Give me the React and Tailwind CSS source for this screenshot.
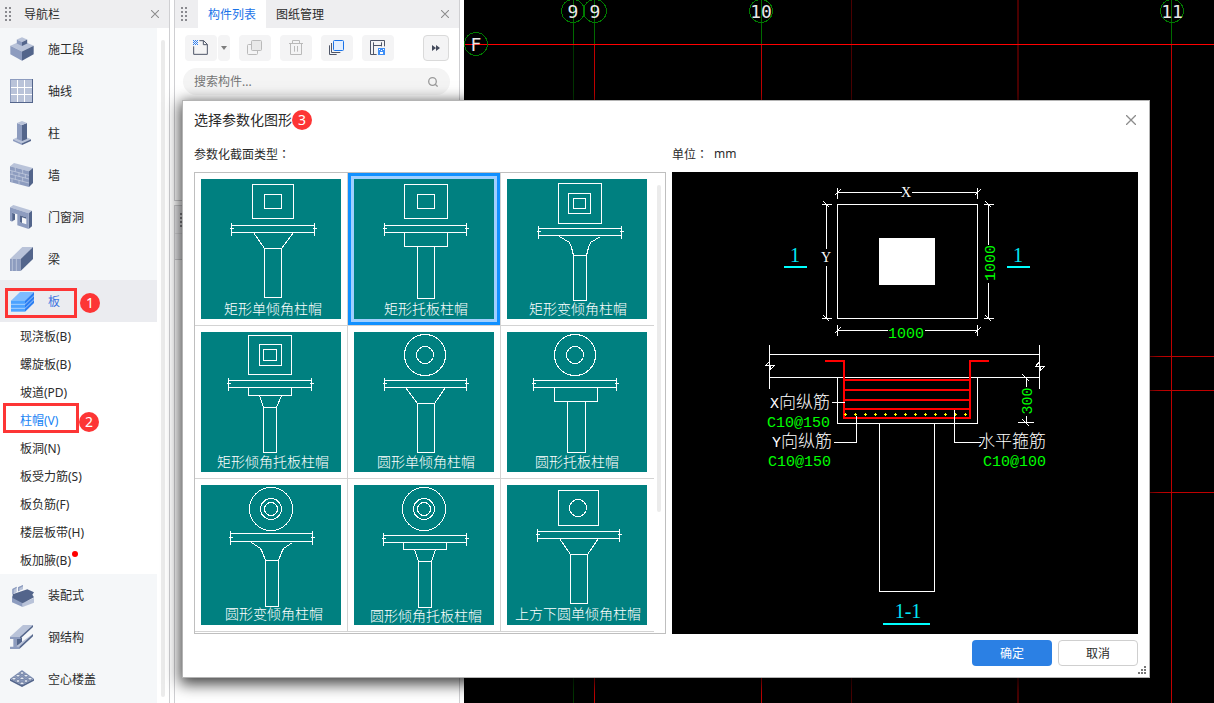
import { useState } from "react";
import clsx from "clsx";

const LIGHT = "#b9c3d9";
const MID = "#8d9cbf";
const DARK = "#53658b";

const NAV_ICONS = {
  stage: (
    <svg viewBox="30 110 72 74" className="h-6 w-6 shrink-0">
      <path fill={LIGHT} d="M66 121 102 137 66 155 30 137z" />
      <path fill={MID} d="M30 137 66 155V183L30 163z" />
      <path fill={DARK} d="M102 137 66 155V183L102 163z" />
      <path fill={LIGHT} d="M66 111 82 118 66 126 50 118z" />
      <path fill={MID} d="M50 118 66 126V138L50 130z" />
      <path fill={DARK} d="M82 118 66 126V138L82 130z" />
    </svg>
  ),
  axis: (
    <svg viewBox="30 237 72 72" className="h-6 w-6 shrink-0">
      <path fill={DARK} d="M30 237h69v72H30z" />
      <path fill={MID} d="M30 237h66v69H30z" />
      <path fill={LIGHT} d="M33 240h63v66H33z" />
      <path stroke="#fff" strokeWidth="3" d="M52.5 240v66M73.5 240v66M33 262.5h63M33 283.5h63" />
    </svg>
  ),
  column: (
    <svg viewBox="30 363 72 72" className="h-6 w-6 shrink-0">
      <path fill={LIGHT} d="M66 406 93 418 66 430 39 418z" />
      <path fill={MID} d="M39 418 66 430V435L39 423z" />
      <path fill={DARK} d="M93 418 66 430V435L93 423z" />
      <path fill={MID} d="M51 369 66 375V423L51 417z" />
      <path fill={DARK} d="M81 369 66 375V423L81 417z" />
      <path fill={LIGHT} d="M66 363 81 369 66 375 51 369z" />
    </svg>
  ),
  wall: (
    <svg viewBox="30 489 72 72" className="h-6 w-6 shrink-0">
      <path fill={LIGHT} d="M30 499 42 489 99 504 87 514z" />
      <path fill={MID} d="M30 499 87 514V561L30 546z" />
      <path fill={DARK} d="M87 514 99 504V549L87 561z" />
      <path
        fill="none"
        stroke="#cbd3e4"
        strokeWidth="2"
        d="M30 511 87 526M30 522 87 537M30 534 87 549M46 503v12M68 509v12M36 513v11M57 518v12M76 523v11M46 527v11M68 532v12M36 536v11M57 541v12"
      />
    </svg>
  ),
  opening: (
    <svg viewBox="30 615 72 72" className="h-6 w-6 shrink-0">
      <path fill={LIGHT} d="M30 622 40 615 96 632 86 640z" />
      <path fill={DARK} d="M86 640 96 632V679L86 687zM36 638 45 641V659L36 664z" />
      <path
        fill={MID}
        fillRule="evenodd"
        d="M30 622 86 640V687L52 676V643L37 638V665L30 662zM60 646V667L79 673V652z"
      />
      <path fill={DARK} d="M60 646 79 652V656L66 652V669L60 667z" />
    </svg>
  ),
  beam: (
    <svg viewBox="30 21 72 72" className="h-6 w-6 shrink-0">
      <path fill={LIGHT} d="M30 57 67 21H99L62 57z" />
      <path fill={MID} d="M30 57H62V93H30z" />
      <path fill={DARK} d="M62 57 99 21V57L62 93z" />
      <path stroke="#cbd3e4" strokeWidth="2" d="M37 57v36M49 57v36" />
    </svg>
  ),
  slab: (
    <svg viewBox="30 147 72 72" className="h-6 w-6 shrink-0">
      <path fill="#7ebcff" d="M33 182 60 156H102L75 182z" />
      <path fill="#4da3ff" d="M33 182H75V215H33z" />
      <path fill="#2b7ef2" d="M75 182 102 156V189L75 215z" />
      <path
        fill="none"
        stroke="#d5e9ff"
        strokeWidth="2"
        d="M33 193H75L102 167M33 205H75L102 179"
      />
    </svg>
  ),
  prefab: (
    <svg viewBox="30 339 72 72" className="h-6 w-6 shrink-0">
      <path fill={MID} d="M36 378 68 392V411L36 397z" />
      <path fill={LIGHT} d="M68 398 102 384V398L68 411z" />
      <path fill={DARK} d="M38 373 82 358 102 367 97 374 102 382 68 400 38 384z" />
      <path fill={LIGHT} d="M37 357 50 350V367L37 373zM54 352 69 345V358L54 364z" />
      <path fill={MID} d="M37 357 50 350V354L41 359V371L37 373zM54 352 69 345V349L58 355V363L54 364z" />
    </svg>
  ),
  steel: (
    <svg viewBox="30 465 72 72" className="h-6 w-6 shrink-0">
      <path fill={LIGHT} d="M30 500 69 465H99L60 500z" />
      <path fill={DARK} d="M60 500 99 465V471L60 507z" />
      <path fill={MID} d="M30 500H60V507H50V529H58V537H30V530H40V507H30z" />
      <path fill={DARK} d="M50 507H60L66 502V516L50 529z" />
      <path fill={LIGHT} d="M50 529 66 515 98 492 60 530z" />
      <path fill={DARK} d="M58 530 99 492V499L58 537z" />
    </svg>
  ),
  hollow: (
    <svg viewBox="30 591 72 72" className="h-6 w-6 shrink-0">
      <path fill={DARK} d="M30 626 66 645 102 626V632L66 651 30 632z" />
      <path fill={MID} d="M66 600 102 626 66 646 30 626z" />
      <g fill="#e6eaf3" stroke={DARK} strokeWidth="2">
        <ellipse cx="66" cy="609" rx="6" ry="4" />
        <ellipse cx="54" cy="617" rx="6" ry="4" />
        <ellipse cx="78" cy="617" rx="6" ry="4" />
        <ellipse cx="42" cy="626" rx="6" ry="4" />
        <ellipse cx="66" cy="625" rx="6" ry="4" />
        <ellipse cx="90" cy="626" rx="6" ry="4" />
        <ellipse cx="54" cy="633" rx="6" ry="4" />
        <ellipse cx="78" cy="633" rx="6" ry="4" />
        <ellipse cx="66" cy="640" rx="6" ry="4" />
      </g>
    </svg>
  ),
};

const NAV_TOP = [
  { icon: "stage", label: "施工段" },
  { icon: "axis", label: "轴线" },
  { icon: "column", label: "柱" },
  { icon: "wall", label: "墙" },
  { icon: "opening", label: "门窗洞" },
  { icon: "beam", label: "梁" },
  { icon: "slab", label: "板", step: 1 },
];

const SLAB_ITEMS = [
  { label: "现浇板(B)" },
  { label: "螺旋板(B)" },
  { label: "坡道(PD)" },
  { label: "柱帽(V)", step: 2 },
  { label: "板洞(N)" },
  { label: "板受力筋(S)" },
  { label: "板负筋(F)" },
  { label: "楼层板带(H)" },
  { label: "板加腋(B)", dot: true },
];

const NAV_BOTTOM = [
  { icon: "prefab", label: "装配式" },
  { icon: "steel", label: "钢结构" },
  { icon: "hollow", label: "空心楼盖" },
];

// slab: [left, right, top, bottom]; column: [left, right, top, bottom]
const SHAPES = [
  {
    label: "矩形单倾角柱帽",
    text: [23, 135],
    rects: [[51, 5, 41, 34], [63, 15, 17, 14]],
    slab: [30, 113, 46, 53],
    cap: "M52 53 63 69M92 53 80 69",
    column: [63, 80, 69, 118],
  },
  {
    label: "矩形托板柱帽",
    text: [30, 135],
    rects: [[50, 5, 43, 34], [63, 15, 17, 14]],
    slab: [30, 112, 46, 53],
    cap: "M50 53V67H93V53",
    column: [63, 80, 67, 119],
  },
  {
    label: "矩形变倾角柱帽",
    text: [22, 135],
    rects: [[51, 4, 43, 40], [61, 14, 22, 20], [66, 19, 12, 10]],
    slab: [31, 114, 49, 56],
    cap: "M52 57 62 63 64 68 66 76M93 57 83 63 81 68 79 76",
    column: [66, 79, 76, 121],
  },
  {
    label: "矩形倾角托板柱帽",
    text: [16, 135],
    rects: [[47, 3, 43, 39], [58, 12, 22, 21], [62, 17, 13, 11]],
    slab: [27, 110, 48, 55],
    cap: "M47 55V63H90V55M58 63 62 75M80 63 75 75",
    column: [62, 75, 75, 120],
  },
  {
    label: "圆形单倾角柱帽",
    text: [23, 135],
    circles: [[70.5, 22.5, 20.5], [70.5, 22.5, 8.5]],
    slab: [30, 112, 48, 55],
    cap: "M51 55 63 71M91 55 80 71",
    column: [63, 80, 71, 120],
  },
  {
    label: "圆形托板柱帽",
    text: [28, 135],
    circles: [[67.5, 22.5, 20.5], [67.5, 22.5, 8.5]],
    slab: [26, 109, 48, 55],
    cap: "M47 55V69H90V55",
    column: [60, 78, 69, 120],
  },
  {
    label: "圆形变倾角柱帽",
    text: [24, 134],
    circles: [[69.5, 23.5, 21.5], [69.5, 23.5, 10.5], [69.5, 23.5, 6.5]],
    slab: [29, 111, 48, 56],
    cap: "M50 57 59 63 61 67 64 75M91 57 82 63 80 67 77 75",
    column: [64, 77, 75, 121],
  },
  {
    label: "圆形倾角托板柱帽",
    text: [16, 136],
    circles: [[69.5, 23.5, 21.5], [69.5, 23.5, 10.5], [69.5, 23.5, 6.5]],
    slab: [29, 112, 50, 57],
    cap: "M49 57V64H92V57M60 64 64 76M81 64 77 76",
    column: [64, 77, 76, 122],
  },
  {
    label: "上方下圆单倾角柱帽",
    text: [8, 134],
    rects: [[51, 5, 40, 35]],
    circles: [[70.5, 22.5, 8.5]],
    slab: [30, 112, 46, 53],
    cap: "M52 53 63 69M91 53 80 69",
    column: [63, 80, 69, 118],
  },
];

function StepBadge({ children, className }) {
  return (
    <span
      className={clsx(
        "grid h-5 w-5 place-items-center rounded-full bg-[#fd3535] text-sm text-white",
        className,
      )}
    >
      {children}
    </span>
  );
}

function Grip() {
  return (
    <svg viewBox="0 0 6 14" className="h-3.5 w-1.5 shrink-0" fill="#8a8a8f">
      {[0, 4, 8, 12].map((y) => (
        <g key={y}>
          <rect x="0" y={y} width="2" height="2" />
          <rect x="4" y={y} width="2" height="2" />
        </g>
      ))}
    </svg>
  );
}

function CloseButton({ className, iconClassName = "h-2 w-2" }) {
  return (
    <button type="button" aria-label="关闭" className={clsx("grid place-items-center", className)}>
      <svg viewBox="0 0 10 10" className={iconClassName} stroke="#8c8c8c" strokeWidth="1.3">
        <path d="M0 0 10 10M10 0 0 10" />
      </svg>
    </button>
  );
}

// the CJK TC face keeps the full-width colon in the middle of its box
function Colon() {
  return <span className="font-['Noto_Sans_CJK_TC',sans-serif]">：</span>;
}

function NavItem({ icon, label, step, active }) {
  return (
    <li className="relative">
      <button
        type="button"
        className={clsx(
          "flex h-[42px] w-full items-center gap-3.5 pl-2.5 text-left",
          active ? "bg-[#ebecf0] text-[#3d74e0]" : "bg-[#f5f7f9]",
        )}
      >
        {NAV_ICONS[icon]}
        <span className="pt-0.5">{label}</span>
      </button>
      {step && (
        <>
          <span className="absolute left-[5px] top-2 h-[30px] w-[72px] border-3 border-[#fd3535]" />
          <StepBadge className="absolute left-20 top-[13px]">{step}</StepBadge>
        </>
      )}
    </li>
  );
}

function NavPanel() {
  return (
    <aside className="flex w-[170px] shrink-0 flex-col border-r border-[#cfcfd2] bg-white">
      <header className="flex h-7 shrink-0 items-center bg-[#eeeef0] pl-[5px] pr-2">
        <Grip />
        <h2 className="ml-[13px] flex-1 pt-0.5">导航栏</h2>
        <CloseButton className="h-3 w-3" />
      </header>
      <div className="flex min-h-0 flex-1">
        <nav className="w-[157px] overflow-hidden bg-[#f5f7f9]">
          <ul>
            {NAV_TOP.map((item) => (
              <NavItem key={item.label} {...item} active={item.icon === "slab"} />
            ))}
          </ul>
          <ul className="bg-white">
            {SLAB_ITEMS.map(({ label, step, dot }) => (
              <li key={label} className="relative">
                <button
                  type="button"
                  className={clsx(
                    "flex h-7 w-full items-center pl-5 pt-0.5 text-left",
                    step && "text-[#1683f5]",
                  )}
                >
                  <span className="relative">
                    {label}
                    {dot && (
                      <span className="absolute -right-[7px] -top-0.5 h-1.5 w-1.5 rounded-full bg-[#ff0000]" />
                    )}
                  </span>
                </button>
                {step && (
                  <>
                    <span className="absolute -top-[3px] left-[3px] h-[30px] w-[76px] border-3 border-[#fd3535]" />
                    <StepBadge className="absolute left-[79px] top-1.5">{step}</StepBadge>
                  </>
                )}
              </li>
            ))}
          </ul>
          <ul>
            {NAV_BOTTOM.map((item) => (
              <NavItem key={item.label} {...item} />
            ))}
          </ul>
        </nav>
        <div className="mb-1.5 ml-1 mt-3 w-1 rounded-full bg-[#ebebeb]" />
      </div>
    </aside>
  );
}

function ToolButton({ label, className, children }) {
  return (
    <button
      type="button"
      aria-label={label}
      className={clsx("grid h-[26px] place-items-center rounded-sm bg-[#f4f4f5]", className)}
    >
      {children}
    </button>
  );
}

function ComponentPanel() {
  return (
    <section className="ml-1 flex w-[286px] shrink-0 flex-col">
      <div className="flex h-[201px] shrink-0 flex-col border-x border-b border-[#cfcfd2] bg-white">
        <header className="flex h-7 shrink-0 items-center bg-[#eeeef0] pl-1.5 pr-2">
          <Grip />
          <div className="ml-[11px] flex h-full flex-1">
            <button type="button" className="w-[68px] bg-white pt-0.5 text-[#1a73e8]">
              构件列表
            </button>
            <button type="button" className="w-[68px] pt-0.5">
              图纸管理
            </button>
          </div>
          <CloseButton className="h-3 w-3" />
        </header>
        <div className="flex items-center pl-2.5 pr-2.5 pt-[7px]">
          <ToolButton label="新建" className="w-8">
            <svg viewBox="66 117 54 54" className="h-[18px] w-[18px]" fill="none">
              <path stroke="#4f5668" strokeWidth="3" d="M71 139V163H112V133L101 122H88M100 122V134H112" />
              <path
                fill="#2b7ef2"
                d="M69 120h3v3h-3zM75 120h3v3h-3zM81 120h3v3h-3zM72 123h3v3h-3zM78 123h3v3h-3zM69 126h3v3h-3zM75 126h3v3h-3zM81 126h3v3h-3zM72 129h3v3h-3zM78 129h3v3h-3zM69 132h3v3h-3zM75 132h3v3h-3zM81 132h3v3h-3z"
              />
            </svg>
          </ToolButton>
          <ToolButton label="新建选项" className="ml-px w-3">
            <svg viewBox="0 0 6 4" className="h-1 w-1.5" fill="#7d7d7d">
              <path d="M0 0H6L3 4z" />
            </svg>
          </ToolButton>
          <ToolButton label="复制" className="ml-[9px] w-8">
            <svg viewBox="228 117 54 54" className="h-[18px] w-[18px]" stroke="#bababa" strokeWidth="3">
              <rect x="232.5" y="133.5" width="30" height="30" rx="3" fill="none" />
              <rect x="244.5" y="121.5" width="30" height="30" rx="3" fill="#e9e9e9" />
            </svg>
          </ToolButton>
          <ToolButton label="删除" className="ml-[9px] w-8">
            <svg viewBox="351 117 54 54" className="h-[18px] w-[18px]" fill="none" stroke="#bababa" strokeWidth="3">
              <path d="M357 130.5H399M367.5 129V121.5H388.5V129M361.5 130V163.5H394.5V130M373.5 138V155M382.5 138V155" />
            </svg>
          </ToolButton>
          <ToolButton label="层间复制" className="ml-[9px] w-8">
            <svg viewBox="474 117 54 54" className="h-[18px] w-[18px]" fill="none" strokeWidth="3">
              <rect x="490.5" y="121.5" width="30" height="30" rx="3" fill="#e3efff" stroke="#1a73e8" />
              <path stroke="#4f5668" d="M484.5 129V157.5H511M478.5 136V163.5H500" />
            </svg>
          </ToolButton>
          <ToolButton label="存档" className="ml-[9px] w-8">
            <svg viewBox="597 117 54 54" className="h-[18px] w-[18px]" fill="none" strokeWidth="3">
              <path
                stroke="#4f5668"
                d="M620 163.5H601.5V121.5H643.5V139M610.5 127V163M634.5 127V139M610.5 136.5H636"
              />
              <rect x="624" y="144" width="21" height="21" fill="#3f8ef5" />
              <path fill="#fff" d="M627 147h3v3h-3zM639 147h3v3h-3zM633 150h3v3h-3zM630 156h9v6h-9z" />
            </svg>
          </ToolButton>
          <ToolButton label="更多" className="ml-auto w-[26px] border border-[#dadada]">
            <svg viewBox="0 0 8 6" className="h-1.5 w-2" fill="#444b5c">
              <path d="M0 0 4 3 0 6zM4 0 8 3 4 6z" />
            </svg>
          </ToolButton>
        </div>
        <div className="ml-2 mr-[9px] mt-[7px] flex h-[27px] items-center rounded-full bg-[#f4f4f4] pl-[11px] pr-3">
          <input
            type="text"
            aria-label="搜索构件"
            placeholder="搜索构件..."
            className="min-w-0 flex-1 bg-transparent outline-none placeholder:text-[#757575]"
          />
          <svg viewBox="0 0 10 10" className="h-2.5 w-2.5" fill="none" stroke="#9a9a9a" strokeWidth="1.3">
            <circle cx="4.5" cy="4.5" r="3.8" />
            <path d="M7.2 7.2 9.6 9.6" />
          </svg>
        </div>
      </div>
      <div className="mt-1 flex-1 border-x border-t border-[#cfcfd2] bg-white">
        <div className="flex h-7 items-center border-b border-[#dcdcde] bg-[#eeeef0] pl-[5px]">
          <Grip />
        </div>
        <div className="h-[26px] border-b border-[#cfcfd2] bg-[#eeeef0]" />
      </div>
    </section>
  );
}

function AxisBubble({ x, y = 11, children }) {
  return (
    <g>
      <circle cx={x} cy={y} r="11.5" fill="none" stroke="#007a00" />
      <text x={x} y={y + 7} fontSize="18" textAnchor="middle" fill="#e8e8e8">
        {children}
      </text>
    </g>
  );
}

function DrawingCanvas() {
  return (
    <div className="ml-1 min-w-0 flex-1 overflow-hidden bg-black">
      <svg
        width="750"
        height="703"
        className="block font-['DejaVu_Sans_Mono','Liberation_Mono',monospace]"
        shapeRendering="crispEdges"
      >
        <path stroke="#4a0000" d="M387.5 0V703" />
        <path stroke="#4a0000" strokeWidth="2" d="M554 0V703" />
        <path stroke="#006a00" d="M109.5 0V44M130.5 0V44M297.5 0V44M707.5 0V44" />
        <path stroke="#c00000" d="M130.5 44V703M297.5 44V703M707.5 44V703M686 356.5H750M686 390.5H750M686 492.5H750" />
        <path stroke="#003500" d="M109.5 44V703" />
        <path stroke="#ff0000" d="M0 44.5H750" />
        <AxisBubble x={109}>9</AxisBubble>
        <AxisBubble x={131}>9</AxisBubble>
        <AxisBubble x={297}>10</AxisBubble>
        <AxisBubble x={708}>11</AxisBubble>
        <AxisBubble x={12} y={44}>F</AxisBubble>
      </svg>
    </div>
  );
}

function ShapeDrawing({ shape }) {
  const { label, text, rects = [], circles = [], slab, cap, column } = shape;
  const [left, right, top, bottom] = slab;
  const [cl, cr, ct, cb] = column;
  const mid = (top + bottom - 1) / 2;
  return (
    <svg viewBox="0 0 140 140" className="block h-[140px] w-[140px] bg-[#008080]">
      <g transform="translate(.5 .5)" fill="none" stroke="#fff" shapeRendering="crispEdges">
        {rects.map(([x, y, w, h]) => (
          <rect key={x} x={x} y={y} width={w} height={h} />
        ))}
        {circles.map(([cx, cy, r]) => (
          <circle key={r} cx={cx} cy={cy} r={r} />
        ))}
        <path d={`M${left} ${top}H${right}M${left} ${bottom}H${right}`} />
        <path d={`M${left} ${top - 3}V${bottom + 3}M${right} ${top - 3}V${bottom + 3}`} />
        <path d={`M${left - 2} ${mid}h4M${right - 2} ${mid}h4`} />
        <path d={cap} />
        <path d={`M${cl} ${ct}H${cr}V${cb}H${cl}z`} />
      </g>
      <text x={text[0]} y={text[1]} fontSize="14" fill="#fff" className="font-light">
        {label}
      </text>
    </svg>
  );
}

function SectionPreview() {
  return (
    <svg
      width="466"
      height="462"
      viewBox="0 0 466 462"
      className="block shrink-0 font-['Liberation_Mono','Noto_Sans_CJK_SC',monospace] font-light"
    >
      <g transform="translate(.5 .5)" fill="none" stroke="#fff" shapeRendering="crispEdges">
        {/* plan */}
        <rect x="165" y="32" width="140" height="114" />
        <rect x="207" y="66" width="55" height="46" fill="#fff" />
        <path d="M165 20H229M239 20H305M165 15V26M305 15V26" />
        <path d="M154 32V76M154 93V146M149 32H159M149 146H159" />
        <path d="M316 32V72M316 110V146M311 32H321M311 146H321" />
        <path d="M165 158H215M252 158H305M165 152V163M305 152V163" />
        <path d="M162 23 168 17M302 23 308 17M162 161 168 155M302 161 308 155" />
        <path d="M151 29 157 35M151 143 157 149M313 29 319 35M313 143 319 149" />
        {/* section */}
        <path d="M97 172V216M367 172V216M97 182H367M97 205H367" />
        <path d="M93 193 97 189 98 197 102 193zM363 194 367 189 368 198 372 194z" />
        <path d="M165 205V251H305V205M207 251V419H262V251" />
        <path d="M354 205V214M354 243V250M345 250H361M350 202 357 209M350 247 357 254" />
      </g>
      <path
        fill="none"
        stroke="#ff0000"
        strokeWidth="2"
        shapeRendering="crispEdges"
        d="M153 189H172V246H298V189H317M172 208H298M172 218H298M172 228H298M172 237H298"
      />
      <path
        stroke="#ffff00"
        strokeWidth="3"
        strokeDasharray="1 9"
        shapeRendering="crispEdges"
        d="M173 242.5H296"
      />
      <path
        stroke="#ffff00"
        strokeWidth="1"
        strokeDasharray="3 7"
        shapeRendering="crispEdges"
        d="M172 242.5H296"
      />
      <g transform="translate(.5 .5)" fill="none" stroke="#fff" shapeRendering="crispEdges">
        <path d="M159 230H172M161 270H184V243M282 237V270H308" />
      </g>
      <path stroke="#00ffff" strokeWidth="2" d="M112 95H135M335 95H358M211 452H258" />

      <g fill="#fff" fontSize="14" textAnchor="middle" className="font-['Liberation_Serif',serif]">
        <text x="234" y="25">X</text>
        <text x="154" y="90">Y</text>
      </g>
      <g fill="#fff" fontSize="17">
        <text x="98" y="236">
          <tspan fontSize="15">X</tspan>向纵筋
        </text>
        <text x="100" y="275">
          <tspan fontSize="15">Y</tspan>向纵筋
        </text>
        <text x="306" y="275">水平箍筋</text>
      </g>
      <g fill="#00ff00" fontSize="15">
        <text x="95" y="255">C10@150</text>
        <text x="96" y="294">C10@150</text>
        <text x="311" y="294">C10@100</text>
        <text x="234" y="166" textAnchor="middle">1000</text>
        <text transform="translate(323 91) rotate(-90)" textAnchor="middle">1000</text>
        <text transform="translate(360 229) rotate(-90)" textAnchor="middle">300</text>
      </g>
      <g
        fill="#00e5f5"
        fontSize="20"
        textAnchor="middle"
        className="font-['Liberation_Serif',serif]"
      >
        <text x="123" y="90">1</text>
        <text x="346" y="90">1</text>
        <text x="236" y="446">1-1</text>
      </g>
    </svg>
  );
}

function ShapeDialog() {
  const [selected, setSelected] = useState("矩形托板柱帽");
  return (
    <div
      role="dialog"
      aria-labelledby="dialog-title"
      className="absolute left-[182px] right-16 top-[100px] border border-[#b4b4b4] bg-white px-[11px] pb-[11px] shadow-[0_4px_14px_2px_rgba(0,0,0,0.75)]"
    >
      <header className="flex h-[38px] items-center">
        <h1 id="dialog-title" className="text-sm">
          选择参数化图形
        </h1>
        <StepBadge>3</StepBadge>
        <CloseButton className="-mr-px ml-auto h-4 w-4" iconClassName="h-2.5 w-2.5" />
      </header>
      <div className="flex gap-1.5">
        <div className="w-[472px] shrink-0">
          <h2 className="h-[33px] pt-[5px] leading-5">
            参数化截面类型
            <Colon />
          </h2>
          <div className="flex h-[462px] overflow-hidden border border-[#bfbfbf]">
            <div className="grid auto-rows-max grid-cols-[153px_153px_153px]">
              {SHAPES.map((shape, i) => (
                <button
                  key={shape.label}
                  type="button"
                  aria-pressed={selected === shape.label}
                  onClick={() => setSelected(shape.label)}
                  className={clsx(
                    "border-b border-[#d3d3d3]",
                    i % 3 === 2 ? "pr-px" : "border-r",
                  )}
                >
                  <span
                    className={clsx(
                      "block border-3 p-[3px]",
                      selected === shape.label
                        ? "border-[#1090ff] bg-[#a0cfff]"
                        : "border-transparent",
                    )}
                  >
                    <ShapeDrawing shape={shape} />
                  </span>
                </button>
              ))}
            </div>
            <div className="ml-[3px] mt-3 h-[327px] w-1 rounded-full bg-[#ebebeb]" />
          </div>
        </div>
        <div className="min-w-0 flex-1">
          <h2 className="flex h-[33px] pt-[5px] leading-5">
            <span>
              单位
              <Colon />
            </span>
            <span className="ml-1.5">mm</span>
          </h2>
          <div className="flex justify-center overflow-hidden bg-black">
            <SectionPreview />
          </div>
        </div>
      </div>
      <footer className="mt-1.5 flex justify-end gap-1.5">
        <button type="button" className="h-[26px] w-20 rounded-sm bg-[#2b80e4] pt-0.5 text-white">
          确定
        </button>
        <button type="button" className="h-[26px] w-20 rounded-sm border border-[#cfcfcf] bg-white pt-0.5">
          取消
        </button>
      </footer>
      <svg viewBox="0 0 8 8" className="absolute bottom-[3px] right-[3px] h-2 w-2" fill="#777">
        <path d="M6 0h2v2H6zM3 3h2v2H3zM6 3h2v2H6zM0 6h2v2H0zM3 6h2v2H3zM6 6h2v2H6z" />
      </svg>
    </div>
  );
}

export default function App() {
  return (
    <div className="relative flex h-screen overflow-hidden bg-white font-['Noto_Sans','Noto_Sans_CJK_SC',sans-serif] text-xs text-[#2b2b2b]">
      <NavPanel />
      <ComponentPanel />
      <DrawingCanvas />
      <ShapeDialog />
    </div>
  );
}
